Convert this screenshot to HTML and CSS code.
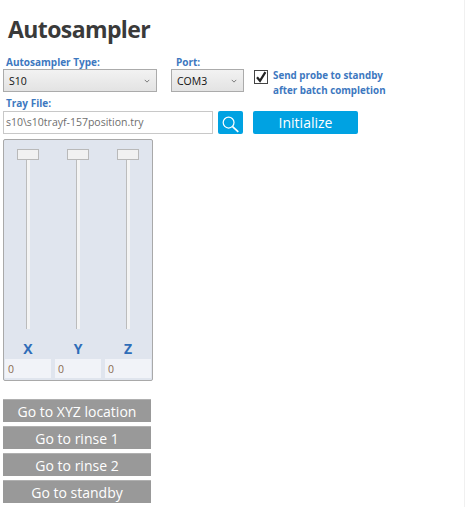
FILE: index.html
```html
<!DOCTYPE html>
<html lang="en">
<head>
<meta charset="utf-8">
<title>Autosampler</title>
<link rel="stylesheet" href="styles.css">
</head>
<body>
<main class="page">
  <h1 class="title">Autosampler</h1>
  <div class="row-top">
    <div class="field field-type">
      <label class="label">Autosampler Type:</label>
      <div class="select select-type"><span>S10</span><svg class="chev" viewBox="0 0 8 5"><path d="M1 1l3 3 3-3" fill="none" stroke="#555" stroke-width="1"/></svg></div>
    </div>
    <div class="field field-port">
      <label class="label">Port:</label>
      <div class="select select-port"><span>COM3</span><svg class="chev" viewBox="0 0 8 5"><path d="M1 1l3 3 3-3" fill="none" stroke="#555" stroke-width="1"/></svg></div>
    </div>
    <div class="standby">
      <span class="check"><svg viewBox="0 0 12 12"><path d="M2 6.2l3 3.6L10.4 1.2" fill="none" stroke="#222" stroke-width="2.2"/></svg></span>
      <span class="standby-text">Send probe to standby<br>after batch completion</span>
    </div>
  </div>
  <label class="label label-tray">Tray File:</label>
  <div class="row-tray">
    <div class="tray-input">s10\s10trayf-157position.try</div>
    <button class="search"><svg viewBox="0 0 20 20"><circle cx="8" cy="8" r="5.7" fill="none" stroke="#fff" stroke-width="1.3"/><path d="M12.2 12.2l6 5.6" stroke="#fff" stroke-width="1.8" fill="none"/></svg></button>
    <button class="init">Initialize</button>
  </div>
  <section class="panel">
    <div class="axis">
      <div class="slider"><span class="thumb"></span><span class="track"></span></div>
      <div class="axis-name">X</div>
      <div class="axis-val">0</div>
    </div>
    <div class="axis">
      <div class="slider"><span class="thumb"></span><span class="track"></span></div>
      <div class="axis-name">Y</div>
      <div class="axis-val">0</div>
    </div>
    <div class="axis">
      <div class="slider"><span class="thumb"></span><span class="track"></span></div>
      <div class="axis-name">Z</div>
      <div class="axis-val">0</div>
    </div>
  </section>
  <div class="actions">
    <button class="go">Go to XYZ location</button>
    <button class="go">Go to rinse 1</button>
    <button class="go">Go to rinse 2</button>
    <button class="go">Go to standby</button>
  </div>
</main>
</body>
</html>
```
FILE: styles.css
```css
html, body { margin: 0; padding: 0; background: #fff; }
body { width: 465px; height: 507px; overflow: hidden; font-family: "Open Sans", "Noto Sans", sans-serif; }
.page { padding: 14px 0 0 3px; box-sizing: border-box; height: 507px; width: 465px; border-right: 1px solid #f0f0f0; }
.title { margin: 0 0 0 5px; font-size: 23px; line-height: 30px; font-weight: 700; color: #3a3a3a; letter-spacing: -0.6px; }
.row-top { display: flex; margin-top: 12px; height: 38px; }
.label { display: block; font-size: 10px; line-height: 13px; font-weight: 700; color: #3d78c0; padding-left: 3px; }
.field-type { width: 168px; }
.field-port { width: 83px; }
.field-port .label { padding-left: 5px; }
.select { box-sizing: border-box; height: 23px; border: 1px solid #ababab; background: linear-gradient(#f2f2f2, #e3e3e3); display: flex; align-items: center; justify-content: space-between; font-size: 10.5px; color: #111; padding: 0 6px 0 5px; }
.select-type { width: 154px; }
.select-port { width: 73px; }
.chev { width: 6px; height: 4px; }
.standby { display: flex; margin-top: 11px; }
.check { box-sizing: border-box; width: 14px; height: 14px; border: 1px solid #444; background: #fff; margin-right: 5px; margin-top: 3px; display: flex; }
.check svg { width: 12px; height: 12px; }
.standby-text { font-size: 9.8px; line-height: 15px; font-weight: 700; color: #3d78c0; margin-top: 1px; }
.label-tray { margin-top: 3px; }
.row-tray { display: flex; margin-top: 1px; }
.tray-input { box-sizing: border-box; width: 210px; height: 23px; border: 1px solid #c8c8c8; background: #fff; font-size: 10.5px; line-height: 20px; color: #6e6e6e; padding-left: 2px; }
.search { width: 25px; height: 23px; margin-left: 5px; padding: 3px 2px 0 3px; border: 0; border-radius: 2px; background: #00a2e2; }
.search svg { width: 19px; height: 19px; display: block; }
.init { width: 105px; height: 23px; margin-left: 10px; padding: 0; border: 0; border-radius: 2px; background: #00a2e2; color: #fff; font: 400 14px "Open Sans", sans-serif; }
.panel { box-sizing: border-box; width: 150px; height: 242px; margin-top: 5px; background: #e0e5ee; border: 1px solid #a9a9a9; border-radius: 2px; display: flex; padding: 9px 0 0 1px; gap: 4px; }
.axis { width: 46px; display: flex; flex-direction: column; align-items: center; }
.slider { height: 180px; width: 100%; display: flex; flex-direction: column; align-items: center; }
.thumb { box-sizing: border-box; width: 22px; height: 11px; background: #f1f1f1; border: 1px solid #b9b9b9; }
.track { width: 4px; flex: 1; background: #f4f4f4; border-left: 1px solid #bcbcbc; box-sizing: border-box; }
.axis-name { font-size: 14px; line-height: 20px; font-weight: 700; color: #2f6db8; margin-top: 10px; }
.axis-val { box-sizing: border-box; width: 100%; height: 19px; background: #f1f3f8; font-size: 10.5px; line-height: 20px; color: #8a6a50; padding-left: 3px; }
.actions { margin-top: 18px; display: flex; flex-direction: column; gap: 4px; }
.go { width: 148px; height: 23px; padding: 0; border: 0; background: #999; color: #fff; font: 400 14px "Open Sans", sans-serif; border-top: 1px solid #b0b0b0; }
```
